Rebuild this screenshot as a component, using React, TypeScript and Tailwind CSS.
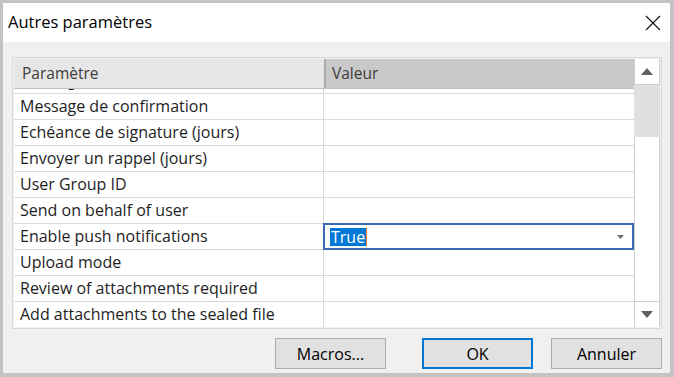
import React from "react";

const rows = [
  "Message de confirmation",
  "Echéance de signature (jours)",
  "Envoyer un rappel (jours)",
  "User Group ID",
  "Send on behalf of user",
  "Enable push notifications",
  "Upload mode",
  "Review of attachments required",
  "Add attachments to the sealed file",
];

const ACTIVE = "Enable push notifications";

const Triangle = ({ up }: { up?: boolean }) => (
  <svg width="12" height="7" viewBox="0 0 12 7">
    <path d={up ? "M0 7 L6 0 L12 7 Z" : "M0 0 L6 7 L12 0 Z"} fill="#606060" />
  </svg>
);

const Button = ({ label, primary, className }: { label: string; primary?: boolean; className?: string }) => (
  <button
    className={
      (primary
        ? "w-[111px] h-[31px] bg-[#e1e1e1] border-2 border-[#0078d7] text-[16px] text-black "
        : "w-[111px] h-[31px] bg-[#e1e1e1] border border-[#adadad] text-[16px] text-black ") + (className ?? "")
    }
  >
    {label}
  </button>
);

export default function App() {
  return (
    <div
      className="w-[674px] h-[377px] flex flex-col bg-[#f0f0f0] border-l-[3px] border-t-[3px] border-r-[4px] border-b-[4px] border-[#c3c3c3] overflow-hidden"
      style={{ fontFamily: '"Open Sans", "Noto Sans", sans-serif' }}
    >
      <div className="h-[39px] shrink-0 bg-white flex items-center justify-between pl-[5px] pr-[9px]">
        <span className="text-[16.5px] text-black -mt-[1px]">Autres paramètres</span>
        <svg width="16" height="16" viewBox="0 0 16 16">
          <path d="M1 1 L15 15 M15 1 L1 15" stroke="#111" strokeWidth="1.1" />
        </svg>
      </div>

      <div className="flex-1 flex flex-col pl-[9px] pr-[8px] pt-[15px] pb-[4px]">
        <div className="h-[272px] border border-[#d9d9d9] p-px flex">
          <div className="flex-1 flex flex-col bg-white">
            <div className="h-[30px] shrink-0 flex border-b border-[#bfbfbf] text-[15.5px] text-[#3c3c3c]">
              <div className="w-[310px] bg-[#e6e6e6] flex items-center pl-[8px]">Paramètre</div>
              <div className="flex-1 bg-[#c9c9c9] border-l-2 border-[#a9a9a9] flex items-center pl-[6px]">
                Valeur
              </div>
            </div>
            <div className="flex-1 overflow-hidden">
              <div className="-mt-[21px]">
                {["Message d'accueil", ...rows].map((r) => (
                  <div key={r} className="h-[26px] flex border-b border-[#dadada] text-[16px] text-[#1e1e1e]">
                    <div className="w-[310px] border-r border-[#dadada] flex items-center pl-[6px] pb-px whitespace-nowrap">{r}</div>
                    {r === ACTIVE ? (
                      <div className="flex-1 -ml-px -mt-px h-[27px] border-2 border-[#3a6ab4] flex items-center pl-[5px] pr-[8px]">
                        <span className="bg-[#0078d7] text-white leading-[18px] px-px">True</span>
                        <span className="w-px h-[18px] bg-[#f07820]" />
                        <div className="flex-1" />
                        <svg width="7" height="4" viewBox="0 0 7 4">
                          <path d="M0 0 L3.5 4 L7 0 Z" fill="#707070" />
                        </svg>
                      </div>
                    ) : (
                      <div className="flex-1" />
                    )}
                  </div>
                ))}
              </div>
            </div>
          </div>
          <div className="w-[26px] flex flex-col bg-white border-x border-[#cfcfcf]">
            <div className="h-[26px] flex items-center justify-center border-b border-[#cfcfcf]">
              <Triangle up />
            </div>
            <div className="h-[52px] bg-[#e0e0e0] -mx-px" />
            <div className="flex-1 border-b border-[#cfcfcf]" />
            <div className="h-[25px] flex items-center justify-center">
              <Triangle />
            </div>
          </div>
        </div>

        <div className="mt-[9px] flex justify-end">
          <Button label="Macros..." />
          <Button label="OK" primary className="ml-[36px]" />
          <Button label="Annuler" className="ml-[18px]" />
        </div>
      </div>
    </div>
  );
}
